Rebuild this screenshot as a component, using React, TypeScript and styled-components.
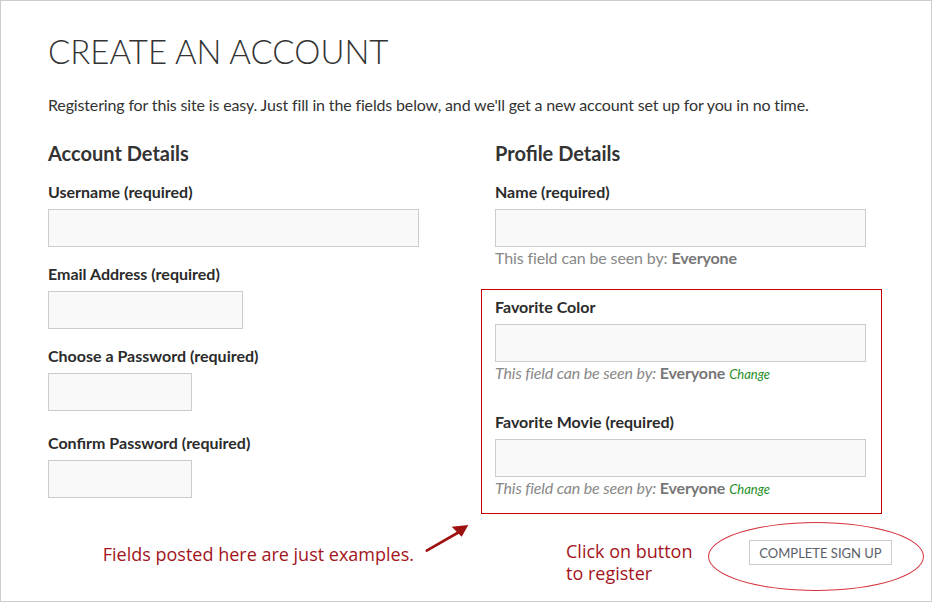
import React from 'react';
import styled, { createGlobalStyle } from 'styled-components';

const GlobalStyle = createGlobalStyle`
  html, body {
    margin: 0;
    padding: 0;
    background: #fff;
  }
  body {
    font-family: Lato, 'Open Sans', sans-serif;
    color: #333;
  }
`;

const Page = styled.div`
  box-sizing: border-box;
  width: 932px;
  height: 602px;
  border: 1px solid #ccc;
  padding: 30px 0 0 47px;
  overflow: hidden;
`;

const Title = styled.h1`
  margin: 0;
  font-size: 33px;
  font-weight: 300;
  line-height: 40px;
  color: #333;
`;

const Intro = styled.p`
  margin: 22px 0 0;
  font-size: 16px;
  letter-spacing: -0.15px;
  line-height: 24px;
  color: #333;
`;

const Columns = styled.div`
  display: grid;
  grid-template-columns: 447px 371px;
  margin-top: 22px;
`;

const Column = styled.div`
  display: flex;
  flex-direction: column;
`;

const SectionTitle = styled.h2`
  margin: 0 0 15px;
  font-size: 20px;
  font-weight: 700;
  line-height: 28px;
  color: #333;
`;

const Field = styled.div<{ $gap: number }>`
  margin-bottom: ${(p) => p.$gap}px;
`;

const Label = styled.label`
  display: block;
  margin-bottom: 7px;
  font-size: 16px;
  font-weight: 700;
  line-height: 20px;
  color: #2b2b2b;
`;

const Input = styled.input<{ $width: number }>`
  display: block;
  box-sizing: border-box;
  width: ${(p) => p.$width}px;
  height: 38px;
  margin: 0;
  padding: 0 8px;
  border: 1px solid #ccc;
  background: #f9f9f9;
  font-family: Lato, sans-serif;
  font-size: 15px;
`;

const Hint = styled.div<{ $italic?: boolean }>`
  margin-top: 1px;
  font-size: 16px;
  letter-spacing: -0.13px;
  line-height: 20px;
  color: #888;
  font-style: ${(p) => (p.$italic ? 'italic' : 'normal')};

  b {
    font-style: normal;
    font-weight: 700;
    color: #777;
  }
`;

const ChangeLink = styled.a`
  margin-left: 4px;
  font-size: 13px;
  letter-spacing: 0;
  font-style: italic;
  color: #1f8f1f;
  text-decoration: none;
`;

const Highlight = styled.div`
  margin: -8px -16px 0 -14px;
  padding: 8px 16px 1px 14px;
  background: #fff;
  box-shadow: inset 0 0 0 1px #cc0000;
`;

const BottomRow = styled.div`
  display: grid;
  grid-template-columns: 447px 1fr;
  margin-top: 9px;
`;

const NoteSide = styled.div`
  display: flex;
  justify-content: flex-end;
  align-items: flex-start;
  padding-right: 25px;
`;

const Note = styled.div<{ $top: number; $width?: number }>`
  margin-top: ${(p) => p.$top}px;
  width: ${(p) => (p.$width ? `${p.$width}px` : 'auto')};
  font-family: 'Open Sans', sans-serif;
  font-size: 18px;
  line-height: 22px;
  color: #a3141c;
  white-space: nowrap;
`;

const Arrow = styled.svg`
  display: block;
  margin: -1px 0 0 10px;
  flex: none;
`;

const SubmitSide = styled.div`
  display: flex;
  align-items: flex-start;
  padding-left: 71px;
`;

const Ellipse = styled.div`
  box-sizing: border-box;
  width: 216px;
  height: 69px;
  margin-top: -1px;
  border: 1.5px solid #d6323b;
  border-radius: 50%;
  display: flex;
  align-items: center;
  justify-content: center;
`;

const SubmitButton = styled.button`
  box-sizing: border-box;
  width: 143px;
  height: 25px;
  margin: 0 0 8px 9px;
  padding: 0;
  border: 1px solid #ccc;
  background: #fff;
  font-family: Lato, sans-serif;
  font-size: 13px;
  color: #5b6068;
  text-transform: uppercase;
`;

const App: React.FC = () => {
  return (
    <>
      <GlobalStyle />
      <Page>
        <Title>CREATE AN ACCOUNT</Title>
        <Intro>
          Registering for this site is easy. Just fill in the fields below, and we'll get a new account set up
          for you in no time.
        </Intro>

        <Columns>
          {/* Account Details */}
          <Column>
            <SectionTitle>Account Details</SectionTitle>
            <Field $gap={17}>
              <Label>Username (required)</Label>
              <Input $width={371} type='text' />
            </Field>
            <Field $gap={17}>
              <Label>Email Address (required)</Label>
              <Input $width={195} type='text' />
            </Field>
            <Field $gap={22}>
              <Label>Choose a Password (required)</Label>
              <Input $width={144} type='password' />
            </Field>
            <Field $gap={0}>
              <Label>Confirm Password (required)</Label>
              <Input $width={144} type='password' />
            </Field>
          </Column>

          {/* Profile Details */}
          <Column>
            <SectionTitle>Profile Details</SectionTitle>
            <Field $gap={29}>
              <Label>Name (required)</Label>
              <Input $width={371} type='text' />
              <Hint>
                This field can be seen by: <b>Everyone</b>
              </Hint>
            </Field>
            <Highlight>
              <Field $gap={28}>
                <Label>Favorite Color</Label>
                <Input $width={371} type='text' />
                <Hint $italic>
                  This field can be seen by: <b>Everyone</b>
                  <ChangeLink href='#'>Change</ChangeLink>
                </Hint>
              </Field>
              <Field $gap={14}>
                <Label>Favorite Movie (required)</Label>
                <Input $width={371} type='text' />
                <Hint $italic>
                  This field can be seen by: <b>Everyone</b>
                  <ChangeLink href='#'>Change</ChangeLink>
                </Hint>
              </Field>
            </Highlight>
          </Column>
        </Columns>

        <BottomRow>
          <NoteSide>
            <Note $top={20}>Fields posted here are just examples.</Note>
            <Arrow width='46' height='32' viewBox='0 0 46 32'>
              <line x1='2.7' y1='28.7' x2='36' y2='9.5' stroke='#9e1111' strokeWidth='2.6' strokeLinecap='round' />
              <polygon points='27.7,4.7 44.3,3 37.7,14.7' fill='#9e1111' />
            </Arrow>
          </NoteSide>
          <SubmitSide>
            <Note $top={17} $width={142}>
              Click on button
              <br />
              to register
            </Note>
            <Ellipse>
              <SubmitButton type='button'>Complete Sign Up</SubmitButton>
            </Ellipse>
          </SubmitSide>
        </BottomRow>
      </Page>
    </>
  );
};

export default App;
